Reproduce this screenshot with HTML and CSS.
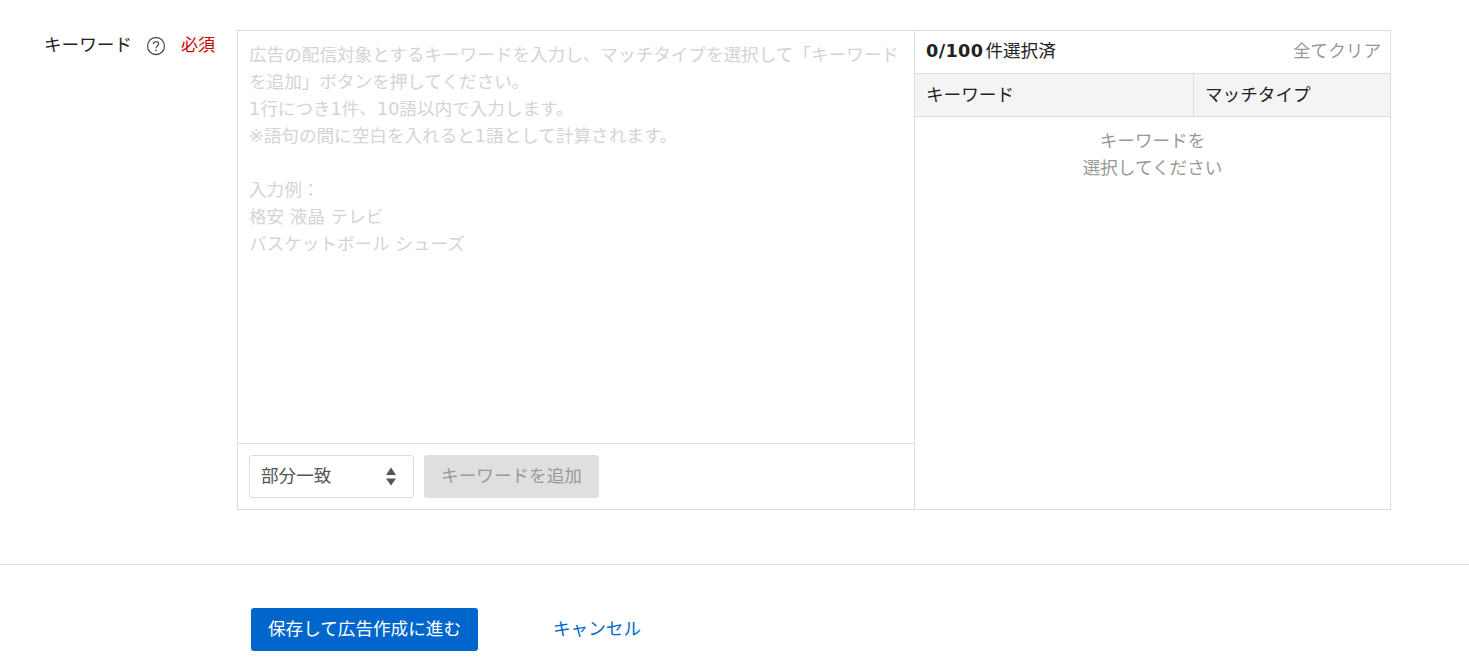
FILE: index.html
```html
<!DOCTYPE html>
<html lang="ja">
<head>
<meta charset="utf-8">
<title>キーワード</title>
<link rel="stylesheet" href="styles.css">
</head>
<body>
<main class="page">
  <section class="form-row">
    <div class="label-col">
      <span class="label-text">キーワード</span>
      <svg class="help-icon" width="20" height="20" viewBox="0 0 20 20" aria-hidden="true">
        <circle cx="10" cy="10" r="8.5" fill="none" stroke="#555" stroke-width="1.3"/>
        <path d="M7.4 8.1c0-1.6 1.1-2.5 2.6-2.5s2.6.9 2.6 2.2c0 1-.5 1.5-1.3 2.1-.8.6-1.2 1-1.2 2v.3" fill="none" stroke="#555" stroke-width="1.3"/>
        <circle cx="10.1" cy="14.3" r=".9" fill="#555"/>
      </svg>
      <span class="required">必須</span>
    </div>
    <div class="keyword-box">
      <div class="input-panel">
        <textarea class="keyword-input" placeholder="広告の配信対象とするキーワードを入力し、マッチタイプを選択して「キーワードを追加」ボタンを押してください。&#10;1行につき1件、10語以内で入力します。&#10;※語句の間に空白を入れると1語として計算されます。&#10;&#10;入力例：&#10;格安 液晶 テレビ&#10;バスケットボール シューズ"></textarea>
        <div class="input-actions">
          <div class="select">
            <span>部分一致</span>
            <svg class="select-arrows" width="12" height="19" viewBox="0 0 12 19" aria-hidden="true">
              <path d="M6 0.5l5 7.5H1z" fill="#555"/>
              <path d="M6 18.5l5-7H1z" fill="#555"/>
            </svg>
          </div>
          <button class="add-button" type="button" disabled>キーワードを追加</button>
        </div>
      </div>
      <div class="result-panel">
        <div class="result-head">
          <div class="count"><b class="count-num">0/100</b><span class="count-unit">件選択済</span></div>
          <a class="clear-link">全てクリア</a>
        </div>
        <div class="table-head">
          <div class="col-keyword">キーワード</div>
          <div class="col-match">マッチタイプ</div>
        </div>
        <p class="empty">キーワードを<br>選択してください</p>
      </div>
    </div>
  </section>
  <footer class="footer">
    <button class="save-button" type="button">保存して広告作成に進む</button>
    <a class="cancel-link">キャンセル</a>
  </footer>
</main>
</body>
</html>
```

FILE: styles.css
```css
* { box-sizing: border-box; }
html, body { margin: 0; height: 100%; overflow: hidden; background: #fff; }
body {
  font-family: "DejaVu Sans", "Noto Sans CJK JP", sans-serif;
  font-size: 17.6px;
  line-height: 27px;
  color: #222;
}
.page { padding-top: 30px; }
.form-row { display: flex; align-items: flex-start; padding-left: 44px; }
.label-col { display: flex; align-items: center; width: 193px; height: 27px; margin-top: 2px; }
.label-text { width: 88px; white-space: nowrap; }
.help-icon { margin-left: 14px; flex: none; }
.required { margin-left: 15px; color: #c00; font-size: 17px; white-space: nowrap; }
.keyword-box { display: flex; width: 1154px; height: 480px; border: 1px solid #ddd; }
.input-panel { display: flex; flex-direction: column; width: 677px; border-right: 1px solid #ddd; }
.keyword-input {
  flex: 1;
  display: block;
  width: 100%;
  padding: 11px;
  border: 0;
  outline: 0;
  resize: none;
  font: inherit;
  line-height: 27px;
  overflow: hidden;
}
.keyword-input::placeholder { color: #d4d4d4; opacity: 1; }
.input-actions { display: flex; gap: 10px; height: 66px; padding: 11px; border-top: 1px solid #ddd; }
.select {
  display: flex; align-items: center; justify-content: space-between;
  width: 165px; height: 43px; padding: 0 16px 0 11px;
  border: 1px solid #ddd; border-radius: 3px; color: #555;
}
.select-arrows { flex: none; width: 12px; height: 19px; }
.add-button {
  width: 175px; height: 43px; padding: 0;
  border: 0; border-radius: 3px; background: #dfdfdf; color: #999;
  font: inherit;
}
.result-panel { flex: 1; display: flex; flex-direction: column; min-width: 0; }
.result-head {
  display: flex; align-items: center; justify-content: space-between;
  height: 43px; padding: 0 9px 2px 11px; border-bottom: 1px solid #ddd;
}
.count { display: flex; align-items: baseline; }
.count-num { font-weight: 700; letter-spacing: .4px; }
.count-unit { margin-left: 2px; }
.clear-link { color: #999; }
.table-head { display: flex; height: 43px; background: #f4f4f4; border-bottom: 1px solid #ddd; line-height: 42px; }
.col-keyword { width: 279px; padding-left: 11px; border-right: 1px solid #ddd; }
.col-match { flex: 1; padding-left: 11px; }
.empty { margin: 11px 0 0; text-align: center; color: #999; }
.footer {
  display: flex; align-items: center;
  margin-top: 54px; padding: 43px 0 0 251px; border-top: 1px solid #ddd;
}
.save-button {
  width: 227px; height: 43px; padding: 0;
  border: 0; border-radius: 3px; background: #0066cc; color: #fff;
  font: inherit;
}
.cancel-link { margin-left: 75px; color: #0066cc; }
```
